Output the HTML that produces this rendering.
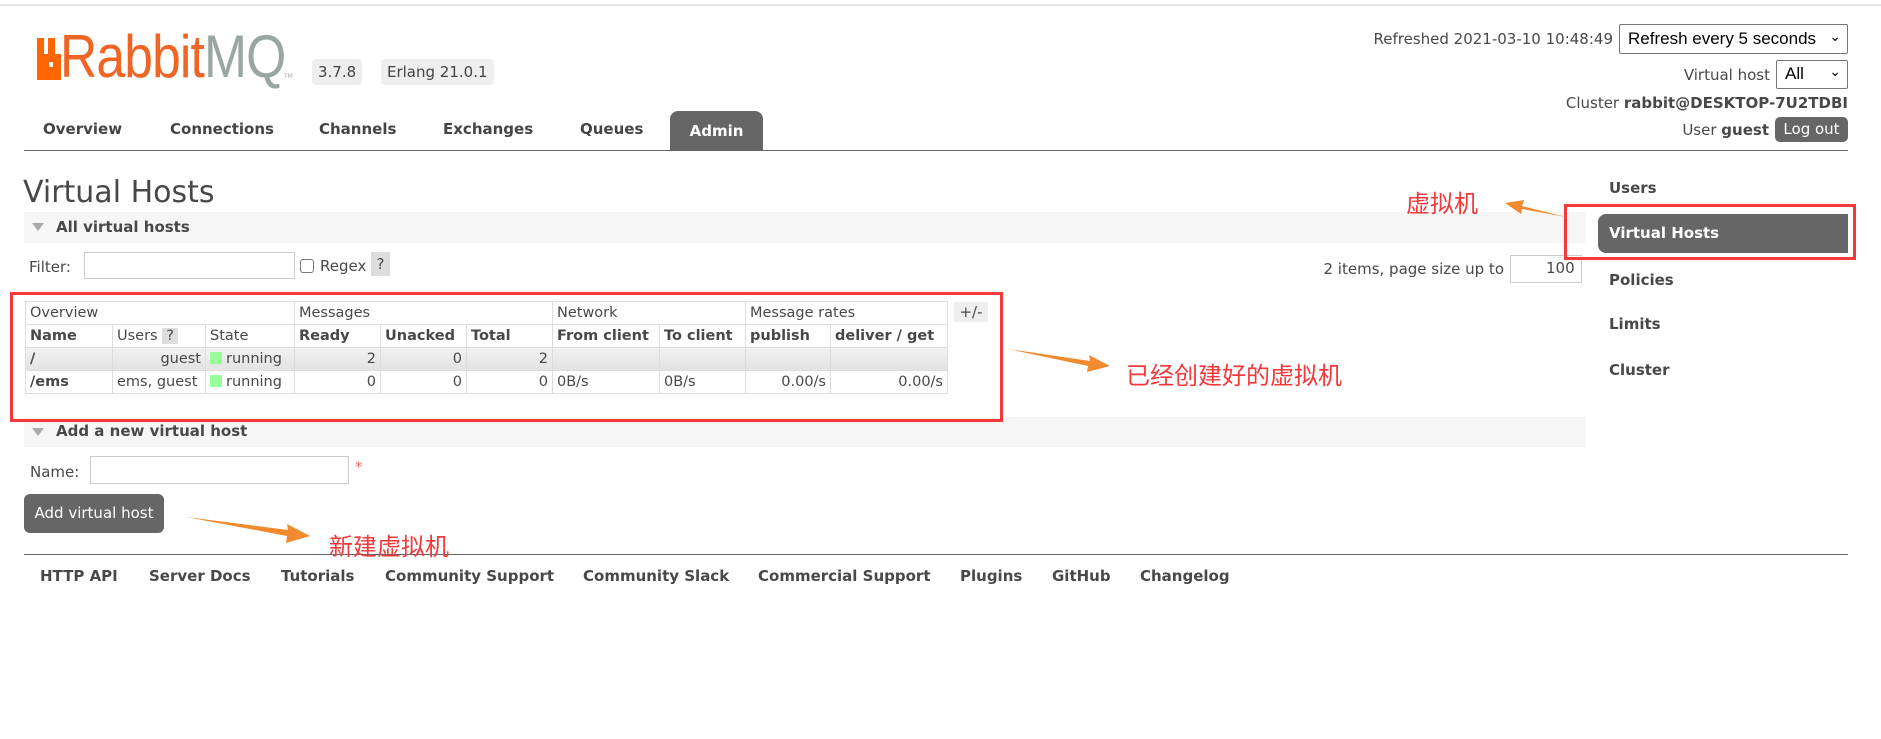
<!DOCTYPE html>
<html><head><meta charset="utf-8"><style>
*{margin:0;padding:0;box-sizing:border-box}
body{width:1881px;height:739px;background:#fff;position:relative;overflow:hidden;font-family:"DejaVu Sans","Liberation Sans",sans-serif;font-size:15px;color:#484848}
.a{position:absolute;white-space:nowrap}
.b{font-weight:bold}
.badge{position:absolute;background:#eee;border-radius:4px;font-size:15px;color:#444;padding:4px 6px;height:26px}
.nav{position:absolute;top:120px;font-weight:bold;font-size:15px;color:#444}
.cn{font-family:"Liberation Sans","Noto Sans CJK SC",sans-serif;color:#f5383a;font-size:24px;position:absolute;white-space:nowrap}
table{position:absolute;left:25px;top:301px;border-collapse:collapse;font-size:14.5px}
td{border:1px solid #ddd;height:23px;padding:0 4px;white-space:nowrap}
.r{text-align:right}
.g{display:inline-block;width:12px;height:12px;background:#9f9;vertical-align:-1px;margin-right:4px}
input{position:absolute;border:1px solid #ccc;background:#fff}
.row{position:absolute;right:33px;display:flex;align-items:center;gap:6px;white-space:nowrap}
.sel{border:1px solid #767676;border-radius:2px;font-family:'Liberation Sans',sans-serif;font-size:17px;color:#000;position:relative}
</style></head><body>
<div class="a" style="left:0;top:4px;width:1881px;height:2px;background:#e4e4e4"></div>
<!-- logo -->
<svg class="a" style="left:37px;top:38px" width="24" height="42" viewBox="0 0 24 42"><path d="M0 0h7v16h4v-16h7v16h6v26h-24z" fill="#f60"/><rect x="12" y="24" width="4" height="5" fill="#fff"/></svg>
<div class="a" style="left:60px;top:22px;font-family:'Liberation Sans',sans-serif;font-size:60px;transform:scaleX(0.86);transform-origin:left;letter-spacing:-1px"><span style="color:#f06424">Rabbit</span><span style="color:#9aa6a2">MQ</span></div>
<div class="a" style="left:284px;top:73px;font-size:6px;color:#aaa">TM</div>
<div class="badge" style="left:312px;top:59px">3.7.8</div>
<div class="badge" style="left:381px;top:59px">Erlang 21.0.1</div>
<div class="nav" style="left:43px">Overview</div>
<div class="nav" style="left:170px">Connections</div>
<div class="nav" style="left:319px">Channels</div>
<div class="nav" style="left:443px">Exchanges</div>
<div class="nav" style="left:580px">Queues</div>
<div class="a" style="left:670px;top:111px;width:93px;height:40px;background:#666;border-radius:8px 8px 0 0;color:#fff;font-weight:bold;text-align:center;line-height:40px">Admin</div>
<div class="a" style="left:24px;top:150px;width:1824px;height:1px;background:#666"></div>
<!-- right header -->
<div class="row" style="top:24px"><span>Refreshed 2021-03-10 10:48:49</span><div class="sel" style="width:229px;height:30px;padding:4px 8px">Refresh every 5 seconds<span style="position:absolute;right:6px;top:3px;font-size:14px">&#8964;</span></div></div>
<div class="row" style="top:60px"><span>Virtual host</span><div class="sel" style="width:72px;height:29px;padding:3px 8px">All<span style="position:absolute;right:6px;top:2px;font-size:14px">&#8964;</span></div></div>
<div class="row" style="top:94px"><span>Cluster <b>rabbit@DESKTOP-7U2TDBI</b></span></div>
<div class="row" style="top:117px"><span>User <b>guest</b></span><div style="width:73px;height:25px;background:#666;border-radius:5px;color:#fff;text-align:center;line-height:25px">Log out</div></div>
<!-- main -->
<div class="a" style="left:23px;top:175px;font-size:30px;color:#484848">Virtual Hosts</div>
<div class="a" style="left:24px;top:212px;width:1562px;height:31px;background:#f6f6f6"></div>
<div class="a" style="left:32px;top:223px;border-left:6px solid transparent;border-right:6px solid transparent;border-top:8px solid #aaa"></div>
<div class="a b" style="left:56px;top:218px">All virtual hosts</div>
<div class="a" style="left:29px;top:258px">Filter:</div>
<input style="left:84px;top:252px;width:211px;height:27px">
<div class="a" style="left:300px;top:259px;width:14px;height:14px;border:1px solid #777;border-radius:3px"></div>
<div class="a" style="left:320px;top:257px">Regex</div>
<div class="a" style="left:371px;top:252px;width:19px;height:24px;background:#ddd;text-align:center;line-height:24px">?</div>
<div class="a" style="right:377px;top:260px">2 items, page size up to</div>
<input style="left:1510px;top:255px;width:72px;height:28px">
<div class="a" style="left:1546px;top:259px">100</div>
<table>
<tr><td colspan="3">Overview</td><td colspan="3">Messages</td><td colspan="2">Network</td><td colspan="2">Message rates</td></tr>
<tr class="b"><td style="width:87px">Name</td><td style="width:93px;font-weight:normal">Users <span style="background:#ddd;padding:0 4px">?</span></td><td style="width:89px;font-weight:normal">State</td><td style="width:86px">Ready</td><td style="width:86px">Unacked</td><td style="width:86px">Total</td><td style="width:107px">From client</td><td style="width:86px">To client</td><td style="width:85px">publish</td><td style="width:117px">deliver / get</td></tr>
<tr style="background:linear-gradient(#f2f2f2,#e2e2e2)"><td class="b">/</td><td class="r">guest</td><td><span class="g"></span>running</td><td class="r">2</td><td class="r">0</td><td class="r">2</td><td></td><td></td><td></td><td></td></tr>
<tr><td class="b">/ems</td><td>ems, guest</td><td><span class="g"></span>running</td><td class="r">0</td><td class="r">0</td><td class="r">0</td><td>0B/s</td><td>0B/s</td><td class="r">0.00/s</td><td class="r">0.00/s</td></tr>
</table>
<div class="a" style="left:954px;top:302px;width:34px;height:20px;background:#eee;text-align:center;line-height:20px">+/-</div>
<div class="a" style="left:24px;top:417px;width:1562px;height:30px;background:#f6f6f6"></div>
<div class="a" style="left:10px;top:292px;width:993px;height:130px;border:3px solid #f5383a"></div>
<div class="a" style="left:32px;top:428px;border-left:6px solid transparent;border-right:6px solid transparent;border-top:8px solid #aaa"></div>
<div class="a b" style="left:56px;top:422px">Add a new virtual host</div>
<div class="a" style="left:30px;top:463px">Name:</div>
<input style="left:90px;top:456px;width:259px;height:28px">
<div class="a" style="left:355px;top:458px;color:#f66">*</div>
<div class="a" style="left:24px;top:494px;width:140px;height:39px;background:#666;border-radius:6px;color:#fff;text-align:center;line-height:39px">Add virtual host</div>
<div class="a" style="left:24px;top:554px;width:1824px;height:1px;background:#666"></div>
<div class="a b" style="left:40px;top:567px">HTTP API</div>
<div class="a b" style="left:149px;top:567px">Server Docs</div>
<div class="a b" style="left:281px;top:567px">Tutorials</div>
<div class="a b" style="left:385px;top:567px">Community Support</div>
<div class="a b" style="left:583px;top:567px">Community Slack</div>
<div class="a b" style="left:758px;top:567px">Commercial Support</div>
<div class="a b" style="left:960px;top:567px">Plugins</div>
<div class="a b" style="left:1052px;top:567px">GitHub</div>
<div class="a b" style="left:1140px;top:567px">Changelog</div>
<!-- right nav -->
<div class="a b" style="left:1609px;top:179px">Users</div>
<div class="a b" style="left:1598px;top:214px;width:250px;height:39px;background:#666;border-radius:8px 0 0 8px;color:#fff;line-height:39px;padding-left:11px">Virtual Hosts</div>
<div class="a" style="left:1564px;top:204px;width:292px;height:56px;border:3px solid #f5383a"></div>
<div class="a b" style="left:1609px;top:271px">Policies</div>
<div class="a b" style="left:1609px;top:315px">Limits</div>
<div class="a b" style="left:1609px;top:361px">Cluster</div>
<!-- annotations -->
<div class="cn" style="left:1406px;top:184px">虚拟机</div>
<div class="cn" style="left:1126px;top:356px">已经创建好的虚拟机</div>
<div class="cn" style="left:329px;top:527px">新建虚拟机</div>
<svg class="a" style="left:0;top:0" width="1881" height="739">
<g fill="#f28a30">
<polygon points="1566,217 1522,206 1524,200 1505,203 1521,214 1522,209"/>
<polygon points="1008,349 1090,361 1089,355 1110,366 1087,372 1088,366"/>
<polygon points="186,517 288,530 287,524 310,536 286,543 287,536"/>
</g></svg>
</body></html>
